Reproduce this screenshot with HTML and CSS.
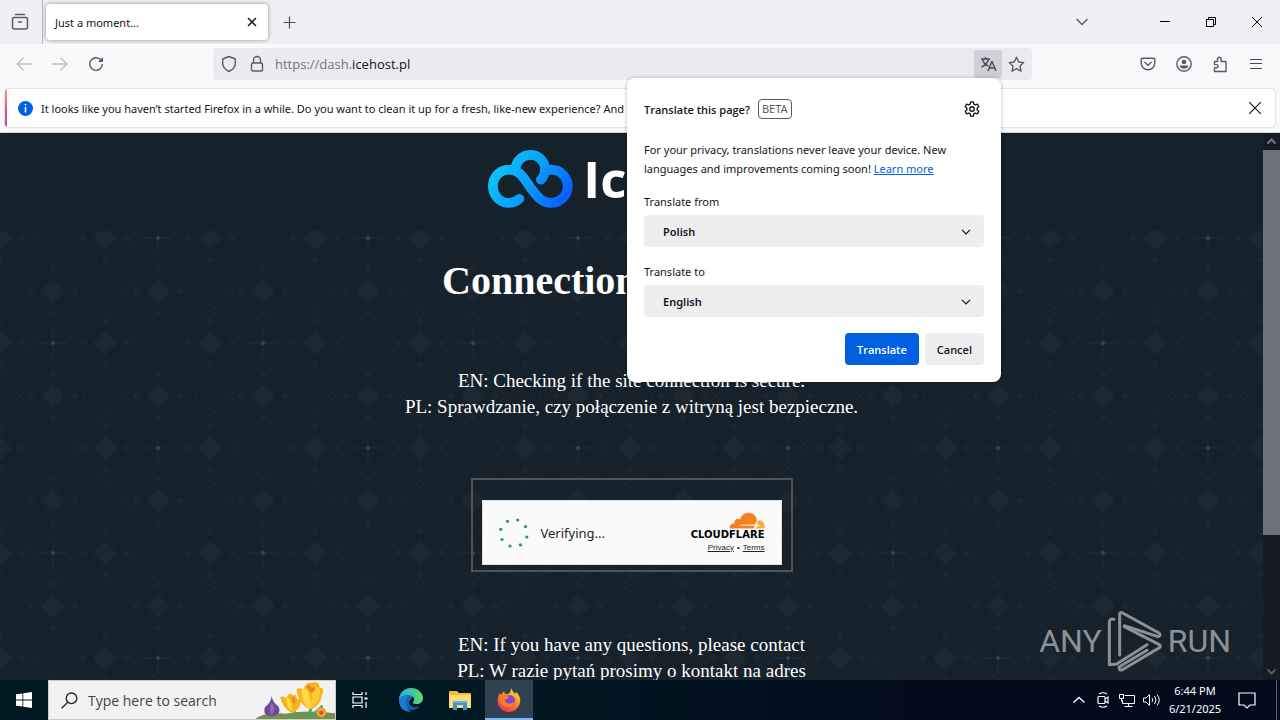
FILE: index.html
```html
<!DOCTYPE html>
<html lang="en">
  <head>
    <meta charset="UTF-8" />
    <meta name="viewport" content="width=device-width, initial-scale=1.0" />
    <title>Just a moment...</title>
    <link rel="stylesheet" href="styles.css">
  </head>
  <body>
    <!-- Tab strip -->
    <header class="tab-strip">
      <button class="icon-button view-button" aria-label="Firefox View">
        <svg width="18" height="18" viewBox="0 0 18 18" fill="none" stroke="#5b5b66" stroke-width="1.5" stroke-linecap="round"><path d="M4.500 1.500h9"/><rect x="1.500" y="4.500" width="15" height="11.500" rx="2"/><path d="M7.500 9h3"/></svg>
      </button>
      <div class="tab">
        <span>Just a moment...</span>
        <button class="icon-button tab-close" aria-label="Close tab">
          <svg width="10" height="10" viewBox="0 0 10 10" stroke="#15141a" stroke-width="1.500"><path d="M1 1l8 8M9 1l-8 8"/></svg>
        </button>
      </div>
      <button class="icon-button new-tab" aria-label="New tab">
        <svg width="13" height="13" viewBox="0 0 13 13" stroke="#4a4a55" stroke-width="1.2"><path d="M6.500 0.500v12M0.500 6.500h12"/></svg>
      </button>
      <div class="window-controls">
        <button class="icon-button list-tabs" aria-label="List all tabs">
          <svg width="12" height="8" viewBox="0 0 12 8" fill="none" stroke="#5b5b66" stroke-width="1.3"><path d="M0.500 1l5.500 5.500L11.500 1"/></svg>
        </button>
        <button class="icon-button" aria-label="Minimize">
          <svg width="10" height="10" viewBox="0 0 10 10" stroke="#000"><path d="M0 4.500h10"/></svg>
        </button>
        <button class="icon-button" aria-label="Restore">
          <svg width="10" height="10" viewBox="0 0 10 10" fill="none" stroke="#000"><path d="M0.500 2.500h7v7h-7zM2.500 2.500v-2h7v7h-2"/></svg>
        </button>
        <button class="icon-button" aria-label="Close">
          <svg width="10" height="10" viewBox="0 0 10 10" stroke="#000"><path d="M0 0l10 10M10 0L0 10"/></svg>
        </button>
      </div>
    </header>

    <!-- Toolbar -->
    <nav class="toolbar">
      <button class="icon-button" aria-label="Back" disabled>
        <svg width="16" height="14" viewBox="0 0 16 14" fill="none" stroke="#bcbcc2" stroke-width="1.4" stroke-linecap="round"><path d="M15 7H1.500M7 1.200L1.200 7 7 12.800"/></svg>
      </button>
      <button class="icon-button" aria-label="Forward" disabled>
        <svg width="16" height="14" viewBox="0 0 16 14" fill="none" stroke="#bcbcc2" stroke-width="1.4" stroke-linecap="round"><path d="M1 7h13.500M9 1.200L14.800 7 9 12.800"/></svg>
      </button>
      <button class="icon-button" aria-label="Reload">
        <svg width="16" height="16" viewBox="0 0 16 16" fill="none" stroke="#5b5b66" stroke-width="1.4"><path d="M13 4.200A6.300 6.300 0 1 0 14.300 8"/><path d="M15 1v5h-5z" fill="#5b5b66" stroke="none"/></svg>
      </button>
      <div class="url-bar">
        <button class="icon-button url-icon" aria-label="Tracking protection">
          <svg width="16" height="18" viewBox="0 0 16 18" fill="none" stroke="#5b5b66" stroke-width="1.4" stroke-linejoin="round"><path d="M8 1.500l6.300 2.500v4c0 4-2.600 6.800-6.300 8.500C4.300 14.800 1.700 12 1.700 8V4z"/></svg>
        </button>
        <button class="icon-button url-icon" aria-label="Site information">
          <svg width="14" height="18" viewBox="0 0 14 18" fill="none" stroke="#5b5b66" stroke-width="1.4"><rect x="1.500" y="8" width="11" height="8" rx="1.500"/><path d="M3.500 8V5a3.500 3.500 0 0 1 7 0v3"/></svg>
        </button>
        <div class="url" role="textbox" contenteditable="true" spellcheck="false" aria-label="Address">https://dash.<b>icehost.pl</b></div>
        <button class="icon-button translate-icon" aria-label="Translate this page">
          <svg width="17" height="16" viewBox="0 0 17 16" fill="none" stroke="#4a4a55" stroke-width="1.4"><path d="M1 3h9M5.500 1v2M2.500 3.500c1 3.500 3 5.500 6 6.500M8.500 3.500c-1 3.500-3.500 6-7 7.500"/><path d="M8 15l3.800-9.300h.4L16 15M9.300 12h5.400"/></svg>
        </button>
        <button class="icon-button url-icon" aria-label="Bookmark this page">
          <svg width="17" height="17" viewBox="0 0 17 17" fill="none" stroke="#5b5b66" stroke-width="1.4" stroke-linejoin="round"><path d="M8.500 1.300l2.200 4.700 5 .6-3.700 3.500 1 5.100-4.500-2.500L4 15.200l1-5.100L1.300 6.600l5-.6z"/></svg>
        </button>
      </div>
      <button class="icon-button" aria-label="Save to Pocket">
        <svg width="16" height="14" viewBox="0 0 16 14" fill="none" stroke="#5b5b66" stroke-width="1.4" stroke-linecap="round" stroke-linejoin="round"><path d="M2.500 1.200h11a1.300 1.300 0 0 1 1.300 1.300V6a6.800 6.800 0 0 1-13.600 0V2.500a1.300 1.300 0 0 1 1.300-1.300z"/><path d="M4.800 5.200L8 8.200l3.200-3"/></svg>
      </button>
      <button class="icon-button" aria-label="Account">
        <svg width="16" height="16" viewBox="0 0 16 16"><circle cx="8" cy="8" r="7.200" fill="none" stroke="#5b5b66" stroke-width="1.400"/><circle cx="8" cy="6" r="2.300" fill="#5b5b66"/><path d="M3.500 9.500h9c0 1.800-2 3.200-4.500 3.200s-4.500-1.400-4.500-3.200z" fill="#5b5b66"/></svg>
      </button>
      <button class="icon-button" aria-label="Extensions">
        <svg width="16" height="17" viewBox="0 0 16 17" fill="none" stroke="#5b5b66" stroke-width="1.4" stroke-linejoin="round"><path d="M2.500 5.500h3V3a1.800 1.800 0 0 1 3.600 0v2.500H14v10H2.500v-3.700h2a1.600 1.600 0 0 0 0-3.200h-2z"/></svg>
      </button>
      <button class="icon-button" aria-label="Menu">
        <svg width="12" height="12" viewBox="0 0 12 12" stroke="#4a4a55" stroke-width="1.2"><path d="M0 1.500h12M0 5.500h12M0 10.500h12"/></svg>
      </button>
    </nav>

    <!-- Notification -->
    <div class="notice-area">
      <div class="notice">
        <svg width="15" height="15" viewBox="0 0 15 15"><circle cx="7.500" cy="7.500" r="7.500" fill="#0061e0"/><path d="M7.500 3v1.600M7.500 6v5.500" stroke="#fff" stroke-width="1.500"/></svg>
        <p>It looks like you haven’t started Firefox in a while. Do you want to clean it up for a fresh, like-new experience? And by the way, welcome back!</p>
        <button class="icon-button notice-close" aria-label="Dismiss">
          <svg width="12" height="12" viewBox="0 0 12 12" stroke="#15141a" stroke-width="1.2"><path d="M0 0l12 12M12 0L0 12"/></svg>
        </button>
      </div>
    </div>

    <!-- Translation panel -->
    <form class="panel" role="dialog" aria-label="Translate this page?">
      <div class="panel-header">
        <h2>Translate this page?</h2>
        <span class="beta">BETA</span>
        <button type="button" class="icon-button settings" aria-label="Settings">
          <svg width="16" height="16" viewBox="0.500 0.200 15 15.600" fill="none" stroke="#15141a" stroke-width="1.3" stroke-linejoin="round"><path d="M6.700 1h2.600l.5 2.200 1.300.8 2.200-.7 1.300 2.300L13 7.200v1.600l1.600 1.600-1.300 2.300-2.200-.7-1.300.8-.5 2.200H6.700l-.5-2.200-1.300-.8-2.200.7-1.300-2.300L3 8.800V7.200L1.400 5.600l1.300-2.300 2.200.7 1.300-.8z"/><circle cx="8" cy="8" r="2.200"/></svg>
        </button>
      </div>
      <p>For your privacy, translations never leave your device. New languages and improvements coming soon! <a href="#">Learn more</a></p>
      <label for="from">Translate from</label>
      <div class="select-box">
        <select id="from"><option>Polish</option><option>English</option></select>
        <svg width="10" height="6" viewBox="0 0 10 6" fill="none" stroke="#15141a" stroke-width="1.2"><path d="M1 0.800l4 4 4-4"/></svg>
      </div>
      <label for="to">Translate to</label>
      <div class="select-box">
        <select id="to"><option>English</option><option>Polish</option></select>
        <svg width="10" height="6" viewBox="0 0 10 6" fill="none" stroke="#15141a" stroke-width="1.2"><path d="M1 0.800l4 4 4-4"/></svg>
      </div>
      <div class="panel-buttons">
        <button type="button" class="primary">Translate</button>
        <button type="button">Cancel</button>
      </div>
    </form>

    <!-- Page -->
    <div class="viewport">
      <main class="page">
        <div class="logo">
          <svg width="85" height="60" viewBox="53 55 252 178" fill="none" stroke="url(#cloud)" stroke-width="29" stroke-linecap="round">
            <defs><linearGradient id="cloud" gradientUnits="userSpaceOnUse" x1="70" y1="80" x2="280" y2="220"><stop offset="0" stop-color="#0ccdf5"/><stop offset="0.500" stop-color="#0b9ffb"/><stop offset="1" stop-color="#0a5cff"/></linearGradient></defs>
            <path d="M146 206Q132 218 115 218A47 49 0 0 1 115 119C150 119 161 149 180 174C199 199 212 218 240 218A49 49 0 0 0 240 119L228 120"/>
            <path d="M135 114A44 44 0 0 1 222 112Q223 136 210 149"/>
          </svg>
          <span>IceHost</span>
        </div>
        <section class="challenge">
          <svg class="pattern" width="100%" height="100%" aria-hidden="true">
            <defs>
              <pattern id="dots" width="2" height="2" patternUnits="userSpaceOnUse"><rect width="1" height="1" fill="#222f38"/><rect x="1" y="1" width="1" height="1" fill="#222f38"/></pattern>
              <g id="diamond">
                <path d="M0-40L40 0 0 40-40 0zM0-33L33 0 0 33-33 0z" fill="none" stroke="#1c2933"/>
                <path d="M0-12L12 0 0 12-12 0z" fill="url(#dots)"/>
                <path d="M0-26l4 4-4 4-4-4zM0 18l4 4-4 4-4-4zM-22-4l4 4-4 4-4-4zM22-4l4 4-4 4-4-4z" fill="#1a2730"/>
              </g>
              <g id="star"><path d="M-14 0h28M0-14v28" stroke="#1f2d36"/><circle r="2" fill="#35434b"/></g>
              <pattern id="tile" width="210" height="210" patternUnits="userSpaceOnUse">
                <use href="#diamond" x="0" y="7"/><use href="#diamond" x="105" y="7"/><use href="#diamond" x="210" y="7"/>
                <use href="#diamond" x="53" y="60"/><use href="#diamond" x="158" y="60"/>
                <use href="#diamond" x="0" y="112"/><use href="#diamond" x="105" y="112"/><use href="#diamond" x="210" y="112"/>
                <use href="#diamond" x="53" y="165"/><use href="#diamond" x="158" y="165"/>
                <use href="#diamond" x="0" y="217"/><use href="#diamond" x="105" y="217"/><use href="#diamond" x="210" y="217"/>
                <use href="#star" x="158" y="7"/><use href="#star" x="53" y="112"/>
              </pattern>
            </defs>
            <rect width="100%" height="100%" fill="url(#tile)"/>
          </svg>
          <h1>Connection inspection</h1>
          <p>EN: Checking if the site connection is secure.<br>PL: Sprawdzanie, czy połączenie z witryną jest bezpieczne.</p>
          <div class="widget-frame">
            <div class="widget">
              <svg width="32" height="32" viewBox="0 0 32 32" fill="#2a9461"><circle cx="9.500" cy="4.300" r="1.600"/><circle cx="19.700" cy="3" r="1.600"/><circle cx="27.500" cy="9.600" r="1.600"/><circle cx="28.800" cy="20" r="1.600"/><circle cx="22.400" cy="27.900" r="1.600"/><circle cx="12" cy="29" r="1.600"/><circle cx="4" cy="22.500" r="1.600"/><circle cx="2.800" cy="12.300" r="1.600"/></svg>
              <span class="verifying">Verifying...</span>
              <div class="cloudflare">
                <svg width="36" height="17" viewBox="0 0 108 50"><path d="M2 49C1 39 8 33 17 33 14 23 25 16 32 22 39 5 54-2 67 3 80 8 84 17 83 28L79 40 73 49z" fill="#f48120"/><path d="M78 49l3-10c2-7 3-15 12-15 10 1 16 13 14 25z" fill="#faad3f"/><path d="M34 38l44-1 4-9 3 10 10 2-11 2-3 7-4-8-43-1z" fill="#fff"/></svg>
                <strong>CLOUDFLARE</strong>
                <div class="terms"><a href="#">Privacy</a><span>•</span><a href="#">Terms</a></div>
              </div>
            </div>
          </div>
          <p>EN: If you have any questions, please contact<br>PL: W razie pytań prosimy o kontakt na adres</p>
        </section>
      </main>
      <div class="scrollbar" aria-hidden="true">
        <svg width="17" height="17" viewBox="0 0 17 17" fill="none" stroke="#76777f" stroke-width="2"><path d="M4.500 10.500l4-4 4 4"/></svg>
        <div class="track"><div class="thumb"></div></div>
        <svg width="17" height="17" viewBox="0 0 17 17" fill="none" stroke="#55565e" stroke-width="2"><path d="M4.500 6.500l4 4 4-4"/></svg>
      </div>
      <div class="watermark">
        <span>ANY</span>
        <svg width="56" height="62" viewBox="268 28 168 186" fill="none" stroke="#8b9196" stroke-width="9" stroke-linejoin="round" stroke-linecap="round"><path d="M289 56q-14-4-14 10v126l22-2 91-58"/><path d="M306 163V42q0-10 9-5l109 60q8 8-3 11l-101-33"/><path d="M320 78l105 54q6 5 0 9l-112 67q-9 2-9-9l84-50"/></svg>
        <span>RUN</span>
      </div>
    </div>

    <!-- Taskbar -->
    <footer class="taskbar">
      <button class="task" aria-label="Start">
        <svg width="16" height="16" viewBox="0 0 16 16" fill="#fff"><path d="M0 2.300l6.500-.9v6.200H0zM7.300 1.300L16 0v7.600H7.300zM0 8.400h6.500v6.200L0 13.700zM7.300 8.400H16V16l-8.700-1.200z"/></svg>
      </button>
      <div class="search">
        <svg width="17" height="17" viewBox="0 0 17 17" fill="none" stroke="#222" stroke-width="1.3"><circle cx="10.500" cy="6.300" r="5.300"/><path d="M6.700 10.200L0.700 16.300"/></svg>
        <input type="text" placeholder="Type here to search" aria-label="Search">
        <svg class="flowers" width="80" height="39" viewBox="0 0 240 117">
          <path d="M0 117Q35 94 90 101 160 88 240 100V117z" fill="#72924b"/>
          <path d="M111 117q10-20 8-38M155 115q16-25 16-52M171 110q24-28 32-32" stroke="#45a85c" stroke-width="8" fill="none"/>
          <path d="M50 49q4 20 20 30 12 25-19 30-30-1-21-28 18-12 20-32z" fill="#704a99"/><path d="M49 67q-8 22 0 39 18-20 0-39z" fill="#9168b5"/>
          <path d="M75 51q12-5 19 4 9-22 19-9 13-4 13 12 11-5 12 7-5 29-28 33-24-9-35-47z" fill="#f5b51c"/><path d="M94 52q16-1 17 42-17-10-17-42z" fill="#ffd746"/><path d="M111 52q13-5 9 21-10-3-9-21z" fill="#ef871c"/>
          <path d="M124 28q12-8 21 3 7-28 23-22 26-8 26 15 16-4 8 20-7 33-33 44-35-7-45-60z" fill="#f7b61d"/><path d="M142 26q22-5 27 59-32-10-27-59z" fill="#ffdb4a"/><path d="M172 27q21-13 23 3 2 33-27 52z" fill="#fdca32"/><path d="M155 20q10-12 14 5 12-9 10 6l-10 9z" fill="#ef7e1f"/>
          <circle cx="199" cy="97" r="15" fill="#f3a034"/><circle cx="199" cy="98" r="6" fill="#d85418"/>
        </svg>
      </div>
      <div class="apps">
        <button class="task" aria-label="Task View">
          <svg width="16" height="16" viewBox="0 0 16 16" fill="none" stroke="#fff" stroke-width="1.200"><path d="M1 0v2.500h9V0M1 16v-2.500h9V16M1 5h9v6H1zM14 0v3M14 10v6"/><path d="M12.500 5.500h3v2h-3z" fill="#fff" stroke="none"/></svg>
        </button>
        <button class="task" aria-label="Microsoft Edge">
          <svg width="24" height="24" viewBox="0 0 24 24"><defs><linearGradient id="edge" x1="0" y1="0" x2="1" y2="1"><stop offset="0" stop-color="#1687d9"/><stop offset="1" stop-color="#114a8b"/></linearGradient><linearGradient id="edge2"><stop offset="0" stop-color="#28a9e2"/><stop offset="1" stop-color="#5fdb68"/></linearGradient></defs><path d="M0 12C0 5 5 0 12 0l3 7-5 7c0 4 4 6 11 4a12 12 0 0 1-21-6z" fill="url(#edge)"/><path d="M0 11C1 4 6 0 12 0c7 0 12 5 12 10 0 4-3 6-7 6-3 0-4-1-3-2 3-3 0-7-5-7-4 0-8 2-9 4z" fill="url(#edge2)"/><path d="M9 8c-4 3-4 13 3 16C4 24 0 19 0 12c1-4 5-5 9-4z" fill="#1c7ed0"/></svg>
        </button>
        <button class="task" aria-label="File Explorer">
          <svg width="22" height="19" viewBox="0 0 22 19"><path d="M0 1q0-1 1-1h7l2 2h11q1 0 1 1v13H0z" fill="#f5bc3a"/><path d="M0 4h22v13H0z" fill="#ffdc72"/><path d="M4 10h14v9h-4v-5H8v5H4z" fill="#3a93d4"/><path d="M4 10h14v2H4z" fill="#62b3e7"/></svg>
        </button>
        <button class="task active" aria-label="Firefox">
          <svg width="24" height="24" viewBox="0 0 24 24"><defs><linearGradient id="fox" x1="0.800" y1="0" x2="0.200" y2="1"><stop offset="0" stop-color="#ffe141"/><stop offset="0.450" stop-color="#ff8a24"/><stop offset="1" stop-color="#f0255a"/></linearGradient></defs><path d="M14 0c1 3 3 4 4 6l1-2c3 3 5 6 4 11a11.400 11.400 0 0 1-22 1C0 11 1 8 3 5l1 2 3-4 1 3h3c2-1 3-3 3-6z" fill="url(#fox)"/><circle cx="12.500" cy="12.500" r="5.500" fill="#7847db"/><path d="M3 8c4-2 8-1 9 2l-4 2c0 4 6 5 9 1 0 4-3 7-7 6-5 0-8-5-7-11z" fill="#ff7a24"/></svg>
        </button>
      </div>
      <div class="tray">
        <svg width="24" height="16" viewBox="0 0 24 16" fill="none" stroke="#fff" stroke-width="1.300"><path d="M6.500 10.500l5.500-5 5.500 5"/></svg>
        <svg width="24" height="16" viewBox="0 0 24 16" fill="none" stroke="#fff" stroke-width="1.200"><rect x="7" y="4.500" width="7" height="7" rx="1"/><path d="M14 7l3-2v6l-3-2M8 2q4-2.500 8 0M8 14q4 2.500 8 0"/></svg>
        <svg width="24" height="16" viewBox="0 0 24 16" fill="none" stroke="#fff"><path d="M9.500 3.500h10v8h-12V8M13.500 11.500v3M9.500 14.500h8M4.500 2.500h4v4h-4zM6.500 6.500v3"/></svg>
        <svg width="24" height="16" viewBox="0 0 24 16" fill="none" stroke="#fff"><path d="M4.500 6v4h2.500l3.500 3.500v-11L7 6zM13 6q1.500 2 0 4M15.500 4q3 4 0 8M18 2.500q4.500 5.500 0 11"/></svg>
        <div class="clock">6:44 PM<br>6/21/2025</div>
        <svg class="notifications" width="18" height="17" viewBox="0 0 18 17" fill="none" stroke="#fff" stroke-width="1.200"><path d="M1 1h16v12h-5l-3 3-3-3H1z"/></svg>
      </div>
    </footer>
  </body>
</html>
```
FILE: styles.css
```css
* {
  box-sizing: border-box;
}

body {
  margin: 0;
  height: 100vh;
  display: flex;
  flex-direction: column;
  position: relative;
  overflow: hidden;
  font-family: "Noto Sans", "Open Sans", sans-serif;
  font-size: 11px;
  color: #15141a;
}

button,
select,
input {
  font: inherit;
  color: inherit;
  border: none;
  padding: 0;
  margin: 0;
}

svg {
  display: block;
  flex-shrink: 0;
}

.icon-button {
  background: transparent;
  width: 36px;
  height: 32px;
  display: flex;
  align-items: center;
  justify-content: center;
  flex-shrink: 0;
}

/* Tab strip */
.tab-strip {
  display: flex;
  align-items: center;
  height: 44px;
  flex-shrink: 0;
  background: #f0f0f4;
}

.view-button {
  width: 43px;
  height: 44px;
  padding-right: 2px;
  border-right: 1px solid #b5b5bd;
}

.tab {
  display: flex;
  align-items: center;
  justify-content: space-between;
  width: 222px;
  height: 36px;
  margin-left: 3px;
  padding: 0 4px 0 9px;
  background: #fff;
  border-radius: 4px;
  box-shadow: 0 0 4px rgba(0, 0, 0, 0.4);
}

.tab-close {
  width: 24px;
  height: 24px;
}

.new-tab {
  margin-left: 3px;
}

.window-controls {
  display: flex;
  margin-left: auto;
}

.window-controls .icon-button {
  width: 46px;
}

.window-controls .list-tabs {
  width: 36px;
  margin-right: 42px;
}

/* Toolbar */
.toolbar {
  display: flex;
  align-items: center;
  height: 40px;
  flex-shrink: 0;
  padding: 0 6px;
  background: #f9f9fb;
}

.url-bar {
  display: flex;
  align-items: center;
  flex: 1;
  height: 32px;
  margin: 0 98px 0 99px;
  padding: 0 2px;
  background: #ebebef;
  border-radius: 4px;
}

.url-icon,
.translate-icon {
  width: 28px;
  height: 28px;
}

.translate-icon {
  background: #cfcfd8;
  border-radius: 3px;
}

.url {
  flex: 1;
  margin-left: 4px;
  font-family: "Open Sans", sans-serif;
  font-size: 13px;
  color: #73737c;
  outline: none;
}

.url b {
  font-weight: normal;
  color: #15141a;
}

/* Notification */
.notice-area {
  flex-shrink: 0;
  padding: 5px;
  background: #f9f9fb;
  border-bottom: 1px solid #d4d4da;
}

.notice {
  display: flex;
  align-items: center;
  gap: 8px;
  height: 38px;
  padding-left: 13px;
  background: linear-gradient(#ff9a5a, #e6539c, #8d52c0) left / 2px 100% no-repeat #fff;
  border-radius: 4px;
  box-shadow: 0 0 2px rgba(0, 0, 0, 0.3);
}

.notice p {
  margin: 0;
  flex: 1;
  white-space: nowrap;
}

.notice-close {
  width: 40px;
}

/* Translation panel */
.panel {
  position: absolute;
  top: 78px;
  right: 279px;
  z-index: 2;
  width: 374px;
  padding: 16px 17px 17px;
  background: #fff;
  border-radius: 8px;
  box-shadow: 0 0 4px rgba(0, 0, 0, 0.25);
}

.panel-header {
  display: flex;
  align-items: center;
  gap: 8px;
  height: 30px;
}

.panel h2 {
  margin: 0;
  font-family: "Open Sans", sans-serif;
  font-size: 11px;
  font-weight: 600;
}

.beta {
  padding: 0 3px;
  border: 1px solid #5b5b66;
  border-radius: 4px;
  line-height: 18px;
  color: #5b5b66;
}

.settings {
  width: 24px;
  margin-left: auto;
}

.panel p {
  margin: 16px 0 15px;
  line-height: 19px;
}

.panel a {
  color: #0061e0;
}

.panel label {
  display: block;
  margin-bottom: 4px;
  line-height: 18px;
}

.select-box {
  position: relative;
  margin-bottom: 16px;
}

.select-box select {
  appearance: none;
  width: 100%;
  height: 32px;
  padding-left: 19px;
  background: #eeeef1;
  border-radius: 4px;
  font-weight: 600;
}

.select-box svg {
  position: absolute;
  right: 13px;
  top: 14px;
  pointer-events: none;
}

.panel-buttons {
  display: flex;
  justify-content: flex-end;
  gap: 6px;
}

.panel-buttons button {
  height: 32px;
  padding: 0 12px;
  border-radius: 4px;
  background: #eeeef1;
  font-family: "Open Sans", sans-serif;
  font-weight: 600;
}

.panel-buttons .primary {
  background: #0061e0;
  color: #fff;
}

/* Page */
.viewport {
  position: relative;
  display: flex;
  flex: 1;
  min-height: 0;
  background: #15212b;
}

.page {
  flex: 1;
  overflow: hidden;
  color: #fff;
  font-family: "Liberation Serif", serif;
  text-align: center;
}

.logo {
  display: flex;
  justify-content: center;
  align-items: center;
  gap: 10px;
  height: 98px;
  padding-bottom: 8px;
  font-family: "Open Sans", sans-serif;
  font-size: 51px;
  font-weight: 700;
}

.challenge {
  position: relative;
  z-index: 0;
  padding: 27px 0 60px;
}

.pattern {
  position: absolute;
  inset: 0;
  z-index: -1;
}

.challenge h1 {
  margin: 0 0 64px;
  font-size: 40px;
  line-height: 46px;
}

.challenge p {
  margin: 0;
  font-size: 19px;
  line-height: 26px;
}

.widget-frame {
  width: 322px;
  margin: 58px auto 60px;
  padding: 20px 9px 5px;
  border: 2px solid #4f5355;
}

.widget {
  display: flex;
  align-items: center;
  height: 65px;
  padding: 0 16px 0 15px;
  background: #fafafa;
  border: 1px solid #e0e0e0;
  color: #232323;
  font-family: "Noto Sans", sans-serif;
}

.verifying {
  margin-left: 11px;
  font-size: 13px;
}

.cloudflare {
  display: flex;
  flex-direction: column;
  align-items: flex-end;
  margin-left: auto;
}

.cloudflare strong {
  margin-top: 1px;
  font-family: "DejaVu Sans", sans-serif;
  font-size: 10px;
  line-height: 10px;
  color: #000;
}

.terms {
  display: flex;
  gap: 3px;
  margin-top: 2px;
  font-family: "Liberation Sans", sans-serif;
  font-size: 8px;
  line-height: 12px;
}

.terms a {
  color: #232323;
}

/* Scrollbar */
.scrollbar {
  display: flex;
  flex-direction: column;
  width: 17px;
  background: #171b26;
}

.track {
  flex: 1;
}

.thumb {
  height: 75%;
  background: #6d717b;
}

/* Watermark */
.watermark {
  position: absolute;
  right: 49px;
  bottom: 8px;
  display: flex;
  align-items: center;
  gap: 5px;
  color: #8b9196;
  font-family: Roboto, "Liberation Sans", sans-serif;
  font-size: 32px;
}

/* Taskbar */
.taskbar {
  display: flex;
  height: 40px;
  flex-shrink: 0;
  background: linear-gradient(90deg, #011722 40%, #020a1b 75%);
}

.apps {
  display: flex;
  gap: 1px;
}

.task {
  display: flex;
  align-items: center;
  justify-content: center;
  width: 48px;
  background: transparent;
}

.apps .task:first-child {
  margin-right: 2px;
}

.task.active {
  background: #30424f;
  box-shadow: inset 0 -2px #76b9ed;
}

.search {
  display: flex;
  align-items: center;
  width: 288px;
  padding-left: 12px;
  background: #f2f2f2;
  border: 1px solid #ccc;
}

.search input {
  flex: 1;
  min-width: 0;
  padding-left: 10px;
  background: transparent;
  font-family: "Open Sans", sans-serif;
  font-size: 14px;
}

.search input::placeholder {
  color: #444;
  opacity: 1;
}

.flowers {
  align-self: flex-end;
}

.tray {
  display: flex;
  align-items: center;
  margin: 0 3px 0 auto;
  padding-right: 20px;
  border-right: 1px solid #59606d;
  color: #fff;
}

.clock {
  width: 64px;
  line-height: 18px;
  text-align: center;
}

.notifications {
  margin-left: 11px;
}
```
